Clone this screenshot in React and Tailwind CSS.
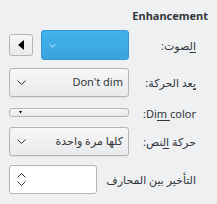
import React from "react";

const font = { fontFamily: '"Noto Sans", "DejaVu Sans", sans-serif' };

function Chevron({ color = "#31363b", w = 9 }) {
  return (
    <svg width={w} height="5" viewBox="0 0 9 5" fill="none">
      <path d="M0.5 0.5 L4.5 4.5 L8.5 0.5" stroke={color} strokeWidth="1" />
    </svg>
  );
}

function Combo({ text }) {
  return (
    <div className="flex h-[29px] w-[120px] items-center justify-between rounded-[3px] border border-[#b4b5b7] bg-gradient-to-b from-[#f7f7f8] to-[#e9eaeb] pl-[7px] pr-[5px] shadow-[0_1px_0_rgba(0,0,0,0.06)]">
      <Chevron />
      <span dir="rtl" className="text-[11px] text-[#31363b]">{text}</span>
    </div>
  );
}

function Label({ children, className = "", dir = "rtl" }) {
  return (
    <span dir={dir} className={"ml-auto text-[11px] leading-none text-[#31363b] " + className}>
      {children}
    </span>
  );
}

export default function App() {
  return (
    <div style={font} className="flex h-[204px] w-[217px] flex-col bg-[#eff0f1] pl-[9px] pr-[21px] pt-[9px]">
      <div className="-mr-[12px] h-[14px] text-right text-[11px] font-bold leading-[14px] text-[#31363b]">
        Enhancement
      </div>

      <div className="mt-[7px] flex h-[30px] items-center">
        <button className="flex h-[22px] w-[24px] items-center justify-center rounded-[3px] border border-[#b4b5b7] bg-gradient-to-b from-[#f6f7f7] to-[#eaebec]">
          <svg width="6" height="10" viewBox="0 0 6 10">
            <path d="M6 0 L0 5 L6 10 Z" fill="#000" />
          </svg>
        </button>
        <div className="ml-[8px] flex h-[30px] w-[88px] items-center rounded-[3px] border border-[#3597d3] bg-gradient-to-b from-[#42b2ed] to-[#3aa3df] pl-[7px]">
          <Chevron color="#fff" w={7} />
        </div>
        <Label>
          <span className="underline underline-offset-2">ال</span>صوت:
        </Label>
      </div>

      <div className="mt-[8px] flex h-[29px] items-center">
        <Combo text="Don't dim" />
        <Label>
          <span className="underline underline-offset-2">ي</span>عد الحركة:
        </Label>
      </div>

      <div className="mt-[11px] flex h-[9px] items-center">
        <div className="relative h-[9px] w-[120px] rounded-[3px] border border-[#b4b5b7] bg-gradient-to-b from-[#f7f7f8] to-[#e9eaeb]">
          <svg className="absolute left-[9px] top-[2px]" width="3" height="3" viewBox="0 0 3 3">
            <path d="M0 0 L3 0 L1.5 2.5 Z" fill="#000" />
          </svg>
        </div>
        <Label dir="ltr" className="mt-[2px] whitespace-pre">
          :Di<u className="underline-offset-2">m </u>color
        </Label>
      </div>

      <div className="mt-[10px] flex h-[29px] items-center">
        <Combo text="كلها مرة واحدة" />
        <Label>
          حركة <span className="underline underline-offset-2">ال</span>نص:
        </Label>
      </div>

      <div className="mt-[9px] flex h-[29px] items-center">
        <div className="flex h-[29px] w-[88px] flex-col justify-center gap-[3px] rounded-[3px] border border-[#b4b5b7] bg-white pl-[7px]">
          <svg width="9" height="5" viewBox="0 0 9 5" fill="none">
            <path d="M0.5 4.5 L4.5 0.5 L8.5 4.5" stroke="#31363b" strokeWidth="1" />
          </svg>
          <Chevron />
        </div>
        <Label>التأخير بين المحارف</Label>
      </div>
    </div>
  );
}
